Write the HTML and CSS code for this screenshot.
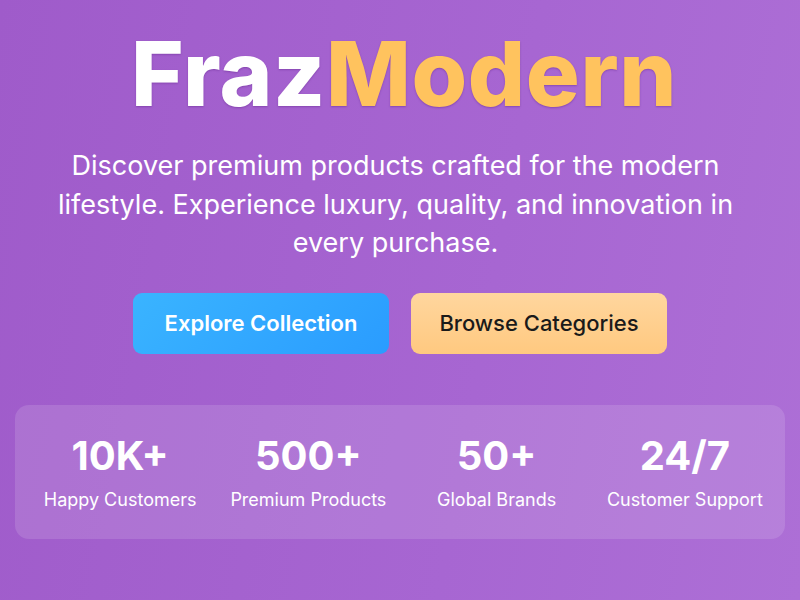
FILE: index.html
```html
<!DOCTYPE html>
<html>
<head>
<meta charset="utf-8">
<link rel="stylesheet" href="styles.css">
</head>
<body>
<main class="hero">
  <h1 class="title"><span class="t-white">Fraz</span><span class="t-gold">Modern</span></h1>
  <p class="lead">Discover premium products crafted for the modern lifestyle. Experience luxury, quality, and innovation in every purchase.</p>
  <div class="actions">
    <a class="btn btn-blue">Explore Collection</a>
    <a class="btn btn-peach">Browse Categories</a>
  </div>
  <section class="stats">
    <div class="stat"><div class="num">10K+</div><div class="label">Happy Customers</div></div>
    <div class="stat"><div class="num">500+</div><div class="label">Premium Products</div></div>
    <div class="stat"><div class="num">50+</div><div class="label">Global Brands</div></div>
    <div class="stat"><div class="num">24/7</div><div class="label">Customer Support</div></div>
  </section>
</main>
</body>
</html>
```
FILE: styles.css
```css
html, body {
  margin: 0;
  height: 100%;
}
body {
  background: linear-gradient(100deg, #9f5bca 0%, #a766d2 60%, #ad6fd6 100%);
  font-family: Inter, "Open Sans", sans-serif;
  color: #fff;
  overflow: hidden;
}
.hero {
  display: flex;
  flex-direction: column;
  align-items: center;
  padding-top: 24px;
}
.title {
  margin: 0;
  font-size: 90px;
  font-weight: 800;
  line-height: 100px;
  letter-spacing: 0.6px;
  padding-left: 8px;
  text-shadow: 0 1px 2px rgba(80, 20, 120, 0.35);
}
.t-white { color: #ffffff; }
.t-gold { color: #ffc35e; }
.lead {
  margin: 23px 9px 0 0;
  width: 700px;
  text-align: center;
  font-size: 27px;
  line-height: 38.5px;
  font-weight: 400;
  color: #fff;
}
.actions {
  display: flex;
  gap: 22px;
  margin-top: 30px;
}
.btn {
  display: flex;
  align-items: center;
  justify-content: center;
  width: 256px;
  height: 61px;
  box-sizing: border-box;
  border-radius: 9px;
  font-size: 22px;
  font-weight: 600;
}
.btn-blue {
  background: linear-gradient(135deg, #3ab4ff 0%, #2a9cff 100%);
  color: #fff;
}
.btn-peach {
  background: linear-gradient(180deg, #ffd69e 0%, #ffc980 100%);
  color: #1a1a1a;
  font-weight: 500;
}
.stats {
  margin-top: 51px;
  width: 770px;
  height: 134px;
  box-sizing: border-box;
  padding: 0 6px 0 11px;
  border-radius: 14px;
  background: rgba(255, 255, 255, 0.13);
  display: grid;
  grid-template-columns: repeat(4, 1fr);
  align-content: center;
}
.stat {
  text-align: center;
}
.num {
  font-size: 40px;
  font-weight: 700;
  line-height: 48px;
}
.label {
  font-size: 18px;
  line-height: 24px;
  margin-top: 8px;
}
```
